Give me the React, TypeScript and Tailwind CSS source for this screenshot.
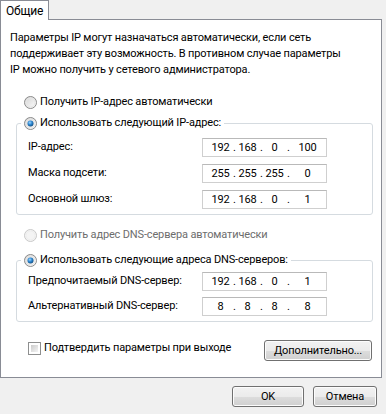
import React from 'react';

const Radio: React.FC<{ checked?: boolean; disabled?: boolean }> = ({ checked, disabled }) => (
  <svg width="13" height="13" viewBox="0 0 13 13" className="shrink-0">
    <defs>
      <linearGradient id="rfill" x1="0" y1="0" x2="1" y2="1">
        <stop offset="0" stopColor="#d2d2d2" />
        <stop offset="1" stopColor="#ffffff" />
      </linearGradient>
      <radialGradient id="rdot" cx="0.4" cy="0.35" r="0.7">
        <stop offset="0" stopColor="#9fd6ff" />
        <stop offset="0.5" stopColor="#2b85cf" />
        <stop offset="1" stopColor="#114a7c" />
      </radialGradient>
    </defs>
    <circle cx="6.5" cy="6.5" r="6" fill={disabled ? '#f4f4f4' : 'url(#rfill)'} stroke={disabled ? '#c9c9c9' : '#8a8a8a'} />
    <circle cx="6.5" cy="6.5" r="4.5" fill="none" stroke={disabled ? '#eeeeee' : '#e6e6e6'} />
    {checked && <circle cx="6.5" cy="6.5" r="3" fill="url(#rdot)" />}
  </svg>
);

const IpBox: React.FC<{ parts: string[] }> = ({ parts }) => (
  <div className="w-[125px] h-[19px] border border-[#cfcfcf] border-t-[#b9b9b9] bg-white flex items-center pl-[5px] leading-none">
    <span className="w-[25px] text-center">{parts[0]}</span>
    <span className="w-[2px] text-center">.</span>
    <span className="w-[25px] text-center">{parts[1]}</span>
    <span className="w-[2px] text-center">.</span>
    <span className="w-[25px] text-center">{parts[2]}</span>
    <span className="w-[2px] text-center">.</span>
    <span className="flex-1 text-center">{parts[3]}</span>
  </div>
);

const Row: React.FC<{ label: string; parts: string[] }> = ({ label, parts }) => (
  <div className="flex items-center pl-[11px]">
    <span className="w-[174px] whitespace-nowrap">{label}</span>
    <IpBox parts={parts} />
  </div>
);

const WinButton: React.FC<{ label: string; className: string }> = ({ label, className }) => (
  <button
    className={`h-[21px] border border-[#707070] rounded-[3px] bg-[linear-gradient(#f2f2f2_0%,#ebebeb_50%,#dddddd_50%,#cfcfcf_100%)] shadow-[inset_0_0_0_1px_#fcfcfc] flex items-center justify-center leading-none whitespace-nowrap ${className}`}
  >
    {label}
  </button>
);

export default function App() {
  return (
    <div className="w-[386px] h-[414px] bg-[#f0f0f0] font-['Roboto',sans-serif] text-[11px] tracking-[-0.15px] text-black overflow-hidden">
      {/* Tab strip */}
      <div className="h-[19px] flex">
        <div className="relative z-10 w-[49px] h-[20px] border-l border-t border-r border-[#898c95] bg-white pl-[5px] pt-[2px] leading-[16px] text-[12px]">
          Общие
        </div>
      </div>

      {/* Tab page */}
      <div className="w-[382px] h-[359px] border border-[#898c95] bg-white">
        <p className="pt-[10px] pl-[9px] leading-[16px] whitespace-nowrap">
          Параметры IP могут назначаться автоматически, если сеть
          <br />
          поддерживает эту возможность. В противном случае параметры
          <br />
          IP можно получить у сетевого администратора.
        </p>

        <div className="mt-[16px] ml-[23px] h-[16px] flex items-center gap-[3px]">
          <Radio />
          <span>Получить IP-адрес автоматически</span>
        </div>

        <div className="mt-[13px] ml-[15px] w-[357px] border border-[#d5dbe0] rounded-[3px] pb-[5px]">
          <div className="-mt-[9px] ml-[4px] px-[3px] h-[16px] w-fit flex items-center gap-[3px] bg-white">
            <Radio checked />
            <span>Использовать следующий IP-адрес:</span>
          </div>
          <div className="mt-[7px] flex flex-col gap-[7px]">
            <Row label="IP-адрес:" parts={['192', '168', '0', '100']} />
            <Row label="Маска подсети:" parts={['255', '255', '255', '0']} />
            <Row label="Основной шлюз:" parts={['192', '168', '0', '1']} />
          </div>
        </div>

        <div className="mt-[12px] ml-[23px] h-[16px] flex items-center gap-[3px] text-[#6d6d6d]">
          <Radio disabled />
          <span>Получить адрес DNS-сервера автоматически</span>
        </div>

        <div className="mt-[17px] ml-[15px] w-[357px] border border-[#d5dbe0] rounded-[3px] pb-[5px]">
          <div className="-mt-[9px] ml-[4px] px-[3px] h-[16px] w-fit flex items-center gap-[3px] bg-white">
            <Radio checked />
            <span>Использовать следующие адреса DNS-серверов:</span>
          </div>
          <div className="mt-[4px] flex flex-col gap-[6px]">
            <Row label="Предпочитаемый DNS-сервер:" parts={['192', '168', '0', '1']} />
            <Row label="Альтернативный DNS-сервер:" parts={['8', '8', '8', '8']} />
          </div>
        </div>

        <div className="mt-[18px] flex items-start">
          <div className="ml-[27px] h-[16px] flex items-center gap-[3px]">
            <div className="w-[13px] h-[13px] border border-[#8e8f8f] bg-white p-[2px]">
              <div className="w-full h-full bg-[linear-gradient(135deg,#cbcbcb,#f4f4f4)]" />
            </div>
            <span>Подтвердить параметры при выходе</span>
          </div>
          <WinButton label="Дополнительно..." className="ml-auto mr-[9px] w-[108px]" />
        </div>
      </div>

      {/* Dialog buttons */}
      <div className="mt-[8px] flex justify-end pr-[9px] gap-[9px]">
        <WinButton label="OK" className="w-[72px]" />
        <WinButton label="Отмена" className="w-[64px]" />
      </div>
    </div>
  );
}
